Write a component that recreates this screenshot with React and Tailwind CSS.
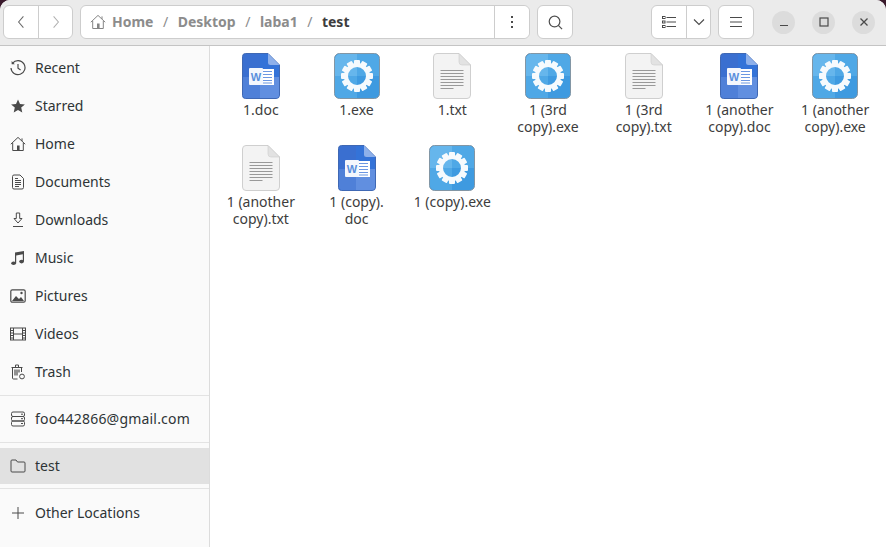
import React from 'react';

const places = [
  { label: 'Recent', icon: 'recent' },
  { label: 'Starred', icon: 'star' },
  { label: 'Home', icon: 'home' },
  { label: 'Documents', icon: 'docs' },
  { label: 'Downloads', icon: 'down' },
  { label: 'Music', icon: 'music' },
  { label: 'Pictures', icon: 'pics' },
  { label: 'Videos', icon: 'video' },
  { label: 'Trash', icon: 'trash' },
];

const files = [
  { type: 'doc', lines: ['1.doc'] },
  { type: 'exe', lines: ['1.exe'] },
  { type: 'txt', lines: ['1.txt'] },
  { type: 'exe', lines: ['1 (3rd', 'copy).exe'] },
  { type: 'txt', lines: ['1 (3rd', 'copy).txt'] },
  { type: 'doc', lines: ['1 (another', 'copy).doc'] },
  { type: 'exe', lines: ['1 (another', 'copy).exe'] },
  { type: 'txt', lines: ['1 (another', 'copy).txt'] },
  { type: 'doc', lines: ['1 (copy).', 'doc'] },
  { type: 'exe', lines: ['1 (copy).exe'] },
];

const HomeIcon = ({ className }) => (
  <svg viewBox="0 0 16 16" className={className} fill="none" stroke="currentColor" strokeWidth="1">
    <path d="M0.8 8.2 8 1.4l7.2 6.8" />
    <path d="M2.7 7v7.5h10.6V7" />
    <path d="M7 14.5V9.5h2.6v5" fill="currentColor" stroke="none" />
    <path d="M12 2.4v2.6" />
  </svg>
);

const PlaceIcon = ({ name }) => {
  const cls = 'w-4 h-4 text-[#4a4a4a]';
  if (name === 'home') return <HomeIcon className={cls} />;
  if (name === 'recent')
    return (
      <svg viewBox="0 0 16 16" className={cls} fill="none" stroke="currentColor" strokeWidth="1.2">
        <path d="M2.6 3.2A7 7 0 1 1 1 8" />
        <path d="M1.6 1v3.2h3.2" fill="currentColor" stroke="none" />
        <path d="M8 4v4.2l2.6 1.8" />
      </svg>
    );
  if (name === 'star')
    return (
      <svg viewBox="0 0 16 16" className={cls} fill="currentColor">
        <path d="M8 1.4l2 4.5 4.9.5-3.7 3.2 1.1 4.8L8 12l-4.3 2.4 1.1-4.8L1.1 6.4 6 5.9z" />
      </svg>
    );
  if (name === 'docs')
    return (
      <svg viewBox="0 0 16 16" className={cls} fill="none" stroke="currentColor" strokeWidth="1">
        <path d="M2.5 2.5a1.5 1.5 0 0 1 1.5-1.5h6l3.5 3.5v9a1.5 1.5 0 0 1-1.5 1.5H4a1.5 1.5 0 0 1-1.5-1.5z" />
        <path d="M5 6.5h6M5 8.5h6M5 10.5h6M5 12.5h4" />
        <path d="M5 4.5h3" />
      </svg>
    );
  if (name === 'down')
    return (
      <svg viewBox="0 0 16 16" className={cls} fill="none" stroke="currentColor" strokeWidth="1">
        <path d="M6.3 1h3.4v5.5h2.3L8 11 4 6.5h2.3z" />
        <path d="M3 14.5h10" />
      </svg>
    );
  if (name === 'music')
    return (
      <svg viewBox="0 0 16 16" className={cls} fill="currentColor">
        <path d="M5 2.6 14 1v10.5h-1.2V4.2L6.2 5.4v8H5z" />
        <ellipse cx="3.6" cy="13.2" rx="2.4" ry="1.8" />
        <ellipse cx="11.6" cy="11.6" rx="2.4" ry="1.8" />
      </svg>
    );
  if (name === 'pics')
    return (
      <svg viewBox="0 0 16 16" className={cls} fill="none" stroke="currentColor" strokeWidth="1.2">
        <rect x="0.8" y="1.8" width="14.4" height="12.4" rx="1.5" />
        <path d="M2 13l4-5 3 3 2-2 3 4z" fill="currentColor" stroke="none" />
        <circle cx="11.5" cy="5" r="1.2" fill="currentColor" stroke="none" />
      </svg>
    );
  if (name === 'video')
    return (
      <svg viewBox="0 0 16 16" className={cls} fill="none" stroke="currentColor" strokeWidth="1">
        <rect x="0.5" y="2" width="15" height="12" />
        <path d="M3.5 2v12M12.5 2v12M3.5 8h9" />
        <path d="M0.5 4.5h3M0.5 7h3M0.5 9.5h3M0.5 12h3M12.5 4.5h3M12.5 7h3M12.5 9.5h3M12.5 12h3" />
      </svg>
    );
  if (name === 'trash')
    return (
      <svg viewBox="0 0 16 16" className={cls} fill="none" stroke="currentColor" strokeWidth="1">
        <path d="M1.5 3.5h11M5.5 3V1h3v2" />
        <path d="M2.5 4v10a1 1 0 0 0 1 1h4" />
        <path d="M11.5 4v4" />
        <path d="M5 5.5v6M7 5.5v6M9 5.5v3" strokeWidth="1.2" />
        <circle cx="12" cy="12.5" r="2.4" />
      </svg>
    );
  return null;
};

const WordIcon = () => (
  <svg viewBox="0 0 38 46" className="w-[38px] h-[46px]">
    <path d="M3.5 0.5H26L37.5 12v30a3.5 3.5 0 0 1-3.5 3.5H3.5A3 3 0 0 1 .5 42.500V3.500A3 3 0 0 1 3.500.5z" fill="#3a6fd0" stroke="#3f68b4" />
    <path d="M18 24H37V42a3 3 0 0 1-3 3H18z" fill="#618fe0" />
    <path d="M1 24H18V45H3.500A3 3 0 0 1 1 42.500z" fill="#4f80d8" />
    <path d="M18 1H26V12H37V24H18z" fill="#3473d8" />
    <path d="M26 .5 37.500 12H28.500a2.500 2.500 0 0 1-2.500-2.500z" fill="#8eb0ea" />
    <rect x="15" y="16" width="17" height="16" fill="#fff" />
    <path d="M21 18.500h9M21 21.500h9M21 24.500h9M21 27.500h9M21 30h9" stroke="#6b97e2" strokeWidth="1.200" />
    <rect x="7" y="15" width="14" height="17" rx="1" fill="#f4f7fd" />
    <text x="14" y="28" textAnchor="middle" fontFamily="Liberation Sans, sans-serif" fontWeight="700" fontSize="11" fill="#5a8fdc">W</text>
  </svg>
);

const Gear = () => {
  const teeth = Array.from({ length: 12 }, (_, i) => i * 30);
  return (
    <g>
      {teeth.map((a) => (
        <rect key={a} x="20" y="7" width="6" height="5" rx="1" fill="#f6fafd" transform={`rotate(${a} 23 23)`} />
      ))}
      <circle cx="23" cy="23" r="11" fill="none" stroke="#f6fafd" strokeWidth="4" />
    </g>
  );
};

const ExeIcon = () => (
  <svg viewBox="0 0 46 46" className="w-[46px] h-[46px]">
    <rect x=".5" y=".5" width="45" height="45" rx="5" fill="#3e9ae0" stroke="#8296a5" />
    <path d="M1 6a5 5 0 0 1 5-5h17v22H1z" fill="#66b6ec" />
    <path d="M23 1h17a5 5 0 0 1 5 5v17H23z" fill="#4fa8e6" />
    <path d="M1 23h22v22H6a5 5 0 0 1-5-5z" fill="#4fa8e6" />
    <Gear />
  </svg>
);

const TxtIcon = () => (
  <svg viewBox="0 0 38 46" className="w-[38px] h-[46px]">
    <path d="M4 .5H26L37.500 12v30a3.500 3.500 0 0 1-3.500 3.500H4A3.500 3.500 0 0 1 .5 42V4A3.500 3.500 0 0 1 4 .5z" fill="#f3f3f3" stroke="#cfcfcf" />
    <path d="M26 .5 37.500 12H29a3 3 0 0 1-3-3z" fill="#e2e2e2" stroke="#cfcfcf" strokeWidth=".6" />
    <path d="M7.500 17.500h23M7.500 20.500h23M7.500 23.500h23M7.500 26.500h23M7.500 29.500h23M7.500 32.500h23M7.500 35.500h13" stroke="#8f8f8f" strokeWidth=".9" />
  </svg>
);

const FileItem = ({ type, lines }) => (
  <div className="flex flex-col items-center">
    <div className="h-[46px] flex items-center justify-center">
      {type === 'doc' && <WordIcon />}
      {type === 'exe' && <ExeIcon />}
      {type === 'txt' && <TxtIcon />}
    </div>
    <p className="mt-[2px] text-center text-[14px] leading-[17px] text-[#3d3d3d] whitespace-pre">
      {lines.join('\n')}
    </p>
  </div>
);

const SidebarRow = ({ icon, label, active, labelClass = '' }) => (
  <div className={`flex items-center pl-[10px] gap-[9px] text-[14px] text-[#2e3436] ${active ? 'h-9 bg-[#e1e1e1]' : 'h-[38px]'}`}>
    <span className="w-4 h-4 shrink-0 flex items-center justify-center">{icon}</span>
    <span className={`pb-[2px] ${labelClass}`}>{label}</span>
  </div>
);

const Sep = () => <div className="h-px bg-[#e3e3e3]" />;

const buttonBox = 'h-[34px] bg-white border border-[#cdcdcd] rounded-[6px] flex items-center';

export default function App() {
  return (
    <div className="w-[886px] h-[547px] overflow-hidden bg-[#3a1a2c]" style={{ fontFamily: '"Noto Sans", sans-serif' }}>
      <div className="h-full rounded-t-[10px] overflow-hidden bg-white flex flex-col">
        {/* Header bar */}
        <header className="h-[46px] shrink-0 bg-[#ebebeb] border-b border-[#c4c4c4] flex items-center pl-[3px] pr-[10px] pb-[1px]">
          <div className={`${buttonBox} w-[70px]`}>
            <div className="w-[35px] h-full flex items-center justify-center border-r border-[#cdcdcd] text-[#6a6a6a]">
              <svg viewBox="0 0 10 16" className="w-[8px] h-[14px]" fill="none" stroke="currentColor" strokeWidth="1.300">
                <path d="M8 1 2 8l6 7" />
              </svg>
            </div>
            <div className="flex-1 flex items-center justify-center text-[#b0b0b0]">
              <svg viewBox="0 0 10 16" className="w-[8px] h-[14px]" fill="none" stroke="currentColor" strokeWidth="1.300">
                <path d="m2 1 6 7-6 7" />
              </svg>
            </div>
          </div>

          <div className={`${buttonBox} ml-[7px] w-[450px] bg-[#f6f6f6]`}>
            <div className="flex-1 flex items-center pl-[9px] text-[14px] font-bold text-[#8c8c8c]">
              <HomeIcon className="w-4 h-4 text-[#858585] mr-[6px]" />
              <span className="pb-[2px]">Home</span>
              <span className="mx-[9.5px] pb-[2px] font-normal">/</span>
              <span className="pb-[2px]">Desktop</span>
              <span className="mx-[9.5px] pb-[2px] font-normal">/</span>
              <span className="pb-[2px]">laba1</span>
              <span className="mx-[9.5px] pb-[2px] font-normal">/</span>
              <span className="pb-[2px] text-[#3d3d3d]">test</span>
            </div>
            <div className="w-[35px] h-full bg-white rounded-r-[6px] border-l border-[#cdcdcd] flex items-center justify-center">
              <svg viewBox="0 0 4 14" className="w-1 h-[14px]" fill="#4a4a4a">
                <rect x="1" y="1" width="2" height="2" />
                <rect x="1" y="6" width="2" height="2" />
                <rect x="1" y="11" width="2" height="2" />
              </svg>
            </div>
          </div>

          <div className={`${buttonBox} ml-[7px] w-9 justify-center`}>
            <svg viewBox="0 0 16 16" className="w-[15px] h-[15px]" fill="none" stroke="#4f4f4f" strokeWidth="1.300">
              <circle cx="7" cy="7" r="5.700" />
              <path d="m11 11 4 4" />
            </svg>
          </div>

          <div className={`${buttonBox} ml-[78px] w-[60px]`}>
            <div className="w-[35px] h-full border-r border-[#cdcdcd] flex items-center justify-center">
              <svg viewBox="0 0 14 12" className="w-[14px] h-3" stroke="#4a4a4a" fill="none">
                <path d="M4.500 1.500H14M4.500 6H14M4.500 10.500H14" />
                <rect x=".5" y=".5" width="2.500" height="2" />
                <rect x=".5" y="5" width="2.500" height="2" />
                <rect x=".5" y="9.500" width="2.500" height="2" />
              </svg>
            </div>
            <div className="flex-1 flex items-center justify-center">
              <svg viewBox="0 0 12 8" className="w-3 h-2" fill="none" stroke="#4a4a4a" strokeWidth="1.100">
                <path d="m1 1.500 5 5 5-5" />
              </svg>
            </div>
          </div>

          <div className={`${buttonBox} ml-[7px] w-9 justify-center`}>
            <svg viewBox="0 0 12 10" className="w-3 h-[10px]" stroke="#4a4a4a" fill="none">
              <path d="M0 .5h12M0 5h12M0 9.500h12" />
            </svg>
          </div>

          <div className="ml-[18px] flex items-center gap-[17px]">
            <div className="w-[23px] h-[23px] rounded-full bg-[#dcdcdc] flex items-center justify-center">
              <svg viewBox="0 0 10 10" className="w-[10px] h-[10px]" stroke="#4a4a4a" strokeWidth="1.200">
                <path d="M1 8.500h8" />
              </svg>
            </div>
            <div className="w-[23px] h-[23px] rounded-full bg-[#dcdcdc] flex items-center justify-center">
              <svg viewBox="0 0 10 10" className="w-[10px] h-[10px]" stroke="#4a4a4a" strokeWidth="1.200" fill="none">
                <rect x="1" y="1" width="8" height="8" />
              </svg>
            </div>
            <div className="w-[23px] h-[23px] rounded-full bg-[#dcdcdc] flex items-center justify-center">
              <svg viewBox="0 0 10 10" className="w-[10px] h-[10px]" stroke="#4a4a4a" strokeWidth="1.300">
                <path d="m1.500 1.500 7 7M8.500 1.500l-7 7" />
              </svg>
            </div>
          </div>
        </header>

        <div className="flex-1 flex min-h-0">
          {/* Sidebar */}
          <aside className="w-[210px] shrink-0 bg-[#fafafa] border-r border-[#dcdcdc] pt-[3px]">
            {places.map((p) => (
              <SidebarRow key={p.label} label={p.label} icon={<PlaceIcon name={p.icon} />} />
            ))}
            <div className="mt-1">
              <Sep />
            </div>
            <div className="mt-1 mb-1">
              <SidebarRow
                label="foo442866@gmail.com"
                labelClass="tracking-[0.2px]"
                icon={
                  <svg viewBox="0 0 16 16" className="w-4 h-4 text-[#4a4a4a]" fill="none" stroke="currentColor">
                    <rect x="1.500" y="1" width="13" height="4.500" rx="1.500" />
                    <rect x="1.500" y="5.500" width="13" height="4.500" rx="1.500" />
                    <rect x="1.500" y="10" width="13" height="5" rx="1.500" />
                    <path d="M11 3.200h2M11 7.700h2M11 12.500h2" />
                  </svg>
                }
              />
            </div>
            <Sep />
            <div className="mt-[5px] mb-1">
              <SidebarRow
                active
                label="test"
                icon={
                  <svg viewBox="0 0 16 16" className="w-4 h-4 text-[#4a4a4a]" fill="none" stroke="currentColor">
                    <path d="M1 3a1 1 0 0 1 1-1h4l1.500 2H14a1 1 0 0 1 1 1v8a1 1 0 0 1-1 1H2a1 1 0 0 1-1-1z" />
                  </svg>
                }
              />
            </div>
            <Sep />
            <div className="mt-[5px]">
              <SidebarRow
                label="Other Locations"
                icon={
                  <svg viewBox="0 0 14 14" className="w-[14px] h-[14px]" stroke="#4a4a4a">
                    <path d="M7 1v12M1 7h12" />
                  </svg>
                }
              />
            </div>
          </aside>

          {/* Files */}
          <main className="flex-1 bg-white pl-[3px] pr-[3px] pt-[7px] grid grid-cols-7 auto-rows-[92px] content-start">
            {files.map((f, i) => (
              <FileItem key={i} type={f.type} lines={f.lines} />
            ))}
          </main>
        </div>
      </div>
    </div>
  );
}
